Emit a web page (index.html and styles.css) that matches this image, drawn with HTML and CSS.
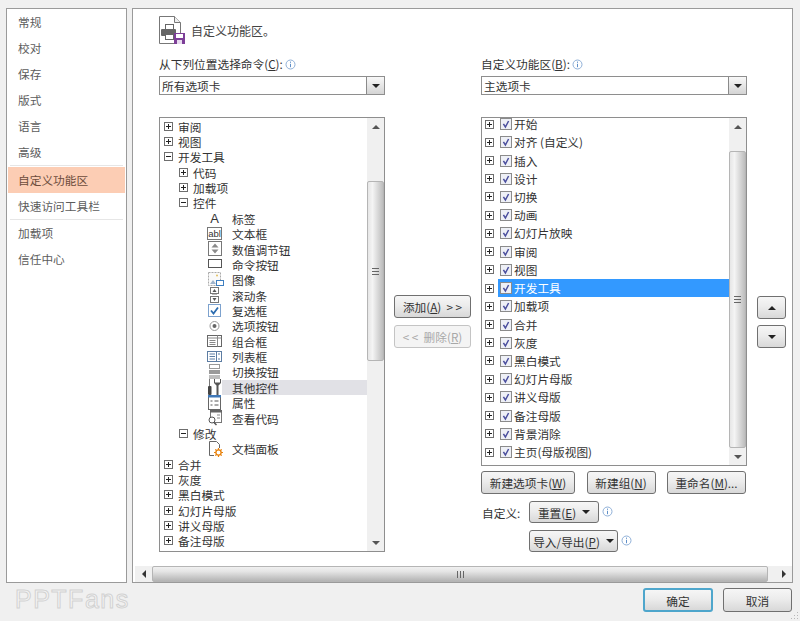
FILE: index.html
```html
<!DOCTYPE html>
<html lang="zh-CN">
<head>
    <meta charset="UTF-8">
    <title>自定义功能区</title>
    <link rel="stylesheet" href="styles.css">
</head>
<body>
    <!-- Shared tree glyphs -->
    <svg class="defs" width="0" height="0">
        <symbol id="plus" viewBox="0 0 9 9"><rect x=".5" y=".5" width="8" height="8" fill="#fff" stroke="#6e6e6e"/><path d="M2 4.5h5M4.5 2v5" stroke="#222"/></symbol>
        <symbol id="minus" viewBox="0 0 9 9"><rect x=".5" y=".5" width="8" height="8" fill="#fff" stroke="#6e6e6e"/><path d="M2 4.5h5" stroke="#222"/></symbol>
        <symbol id="check" viewBox="0 0 12 12"><rect x=".5" y=".5" width="11" height="11" fill="#eef0f6" stroke="#8b8b8b"/><path d="M3.4 5.8l2 3.2 3.2-6" fill="none" stroke="#4b4f9e" stroke-width="1.5"/></symbol>
        <symbol id="info" viewBox="0 0 11 11"><circle cx="5.5" cy="5.5" r="4.5" fill="#fff" stroke="#8fb0d8"/><path d="M5.5 2.6v1.2M5.5 4.8v3.4" stroke="#5f8fc8"/></symbol>
    </svg>

    <div class="window">
        <div class="panels">
            <!-- Left categories -->
            <div class="nav">
                <div class="nav-item">常规</div>
                <div class="nav-item">校对</div>
                <div class="nav-item">保存</div>
                <div class="nav-item">版式</div>
                <div class="nav-item">语言</div>
                <div class="nav-item">高级</div>
                <div class="nav-sep"></div>
                <div class="nav-item active">自定义功能区</div>
                <div class="nav-item">快速访问工具栏</div>
                <div class="nav-sep"></div>
                <div class="nav-item">加载项</div>
                <div class="nav-item">信任中心</div>
            </div>

            <div class="main">
                <div class="main-body">
                    <div class="heading">
                        <svg class="heading-icon" width="27" height="29" viewBox="0 0 27 29">
                            <path d="M.5.5h15l6 6v21H.5z" fill="#fff" stroke="#777"/>
                            <path d="M15.500.5v6h6" fill="#eee" stroke="#777"/>
                            <rect x="6.500" y="8.500" width="8" height="5" fill="#fff" stroke="#666"/>
                            <rect x="2" y="13" width="15" height="7" rx="1" fill="#666"/>
                            <rect x="6.500" y="18.500" width="8" height="5" fill="#fff" stroke="#666"/>
                            <rect x="15" y="17" width="11" height="11" fill="#7d3f98"/>
                            <rect x="17" y="18" width="7" height="4" fill="#fff"/>
                            <rect x="18" y="24" width="5" height="4" fill="#e8dcef"/>
                        </svg>
                        <span>自定义功能区。</span>
                    </div>

                    <div class="columns">
                        <div class="col-left">
                            <div class="field-label"><span>从下列位置选择命令(<u>C</u>):</span><svg class="info"><use href="#info"/></svg></div>
                            <div class="select"><span>所有选项卡</span><div class="select-btn"><i class="tri-down"></i></div></div>

                            <div class="tree tree-left">
                                <div class="tree-rows">
                                    <div class="row"><svg class="exp"><use href="#plus"/></svg><span class="text">审阅</span></div>
                                    <div class="row"><svg class="exp"><use href="#plus"/></svg><span class="text">视图</span></div>
                                    <div class="row"><svg class="exp"><use href="#minus"/></svg><span class="text">开发工具</span></div>
                                    <div class="row lv1"><svg class="exp"><use href="#plus"/></svg><span class="text">代码</span></div>
                                    <div class="row lv1"><svg class="exp"><use href="#plus"/></svg><span class="text">加载项</span></div>
                                    <div class="row lv1"><svg class="exp"><use href="#minus"/></svg><span class="text">控件</span></div>
                                    <div class="row leaf"><span class="glyph-a">A</span><span class="text">标签</span></div>
                                    <div class="row leaf"><span class="glyph-abl">abl</span><span class="text">文本框</span></div>
                                    <div class="row leaf"><svg class="ic" viewBox="0 0 16 16"><rect x="1.500" y=".5" width="13" height="14" fill="#fff" stroke="#777"/><path d="M8 2.500l3.500 4h-7zM8 12.500l3.500-4h-7z" fill="#8a8a8a"/></svg><span class="text">数值调节钮</span></div>
                                    <div class="row leaf"><svg class="ic" viewBox="0 0 16 16"><rect x="1.500" y="3.500" width="13" height="8" fill="#fff" stroke="#555"/></svg><span class="text">命令按钮</span></div>
                                    <div class="row leaf"><svg class="ic" viewBox="0 0 16 16"><rect x="1.500" y=".5" width="12" height="13" fill="#fafafa" stroke="#aaa" stroke-dasharray="2 1"/><path d="M3 12l3-4 3 4z" fill="#9fb4cc"/><circle cx="10" cy="3.500" r="1" fill="#e2c060"/><rect x="9.500" y="8.500" width="7" height="5" fill="#fff" stroke="#3f7fc0"/></svg><span class="text">图像</span></div>
                                    <div class="row leaf"><svg class="ic" viewBox="0 0 16 16"><rect x="3.500" y=".5" width="8" height="6" fill="#fff" stroke="#777"/><path d="M7.500 2l2 3h-4z" fill="#555"/><path d="M5 7.500h5" stroke="#bbb"/><rect x="3.500" y="9.500" width="8" height="6" fill="#fff" stroke="#777"/><path d="M7.500 14l2-3h-4z" fill="#555"/></svg><span class="text">滚动条</span></div>
                                    <div class="row leaf"><svg class="ic" viewBox="0 0 16 16"><rect x="1.500" y="1.500" width="12" height="12" fill="#fff" stroke="#7da2ce"/><path d="M4 7.500l2.500 3 4.500-6" fill="none" stroke="#2b6cb0" stroke-width="1.800"/></svg><span class="text">复选框</span></div>
                                    <div class="row leaf"><svg class="ic" viewBox="0 0 16 16"><circle cx="7.500" cy="8" r="4.500" fill="#fff" stroke="#999"/><circle cx="7.500" cy="8" r="2" fill="#666"/></svg><span class="text">选项按钮</span></div>
                                    <div class="row leaf"><svg class="ic" viewBox="0 0 16 16"><rect x=".5" y="2.500" width="14" height="11" fill="#fff" stroke="#666"/><path d="M.5 5h14M10.500 2.500v11M2.500 7.500h6M2.500 9.500h6M2.500 11.500h6" stroke="#888"/></svg><span class="text">组合框</span></div>
                                    <div class="row leaf"><svg class="ic" viewBox="0 0 16 16"><rect x=".5" y="2.500" width="14" height="10" fill="#fff" stroke="#5d7da3"/><path d="M9.500 2.500v10M2.500 5h5.500M2.500 7.500h5.500M2.500 10h5.500M11 5h2M11 10h2" stroke="#5d7da3"/></svg><span class="text">列表框</span></div>
                                    <div class="row leaf"><svg class="ic" viewBox="0 0 16 16"><rect x="2.500" y=".5" width="10" height="4" fill="#fff" stroke="#999"/><rect x="2" y="6" width="11" height="4" fill="#9a9a9a"/><rect x="2" y="11" width="11" height="4" fill="#bdbdbd"/></svg><span class="text">切换按钮</span></div>
                                    <div class="row leaf hover"><svg class="ic" viewBox="0 0 16 16"><path d="M2.500 0v7" stroke="#777"/><rect x="1" y="7" width="3.500" height="9" rx="1" fill="#444"/><path d="M7 0v4l2.500 2.500V16h2V6.500L14 4V0h-1v3.500H8V0z" fill="#555"/></svg><span class="text">其他控件</span></div>
                                    <div class="row leaf"><svg class="ic" viewBox="0 0 16 16"><rect x="1.500" y=".5" width="12" height="14" fill="#fff" stroke="#666"/><rect x="1" y="0" width="13" height="2.500" fill="#3f78b8"/><path d="M3.500 6h2M7.500 6h4M3.500 10h2M7.500 10h4" stroke="#555"/></svg><span class="text">属性</span></div>
                                    <div class="row leaf"><svg class="ic" viewBox="0 0 16 16"><rect x="3.500" y=".5" width="11" height="12" fill="#fff" stroke="#777"/><rect x="3" y="0" width="12" height="2.500" fill="#666"/><path d="M10 5h3M10 8h3" stroke="#888"/><circle cx="5" cy="10" r="3" fill="#fff" stroke="#555"/><path d="M7 12.500l2.500 2.500" stroke="#555" stroke-width="1.500"/></svg><span class="text">查看代码</span></div>
                                    <div class="row lv1"><svg class="exp"><use href="#minus"/></svg><span class="text">修改</span></div>
                                    <div class="row leaf"><svg class="ic" viewBox="0 0 16 16"><path d="M2.500.5h7l3 3v11h-10z" fill="#fff" stroke="#666"/><rect x="7" y="7" width="9" height="9" fill="#fff"/><path d="M11.500 7v9M7 11.500h9M8.300 8.300l6.400 6.400M14.700 8.300l-6.400 6.400" stroke="#e8820c" stroke-width="1.200"/><circle cx="11.500" cy="11.500" r="2.600" fill="#fff" stroke="#e8820c" stroke-width="1.300"/></svg><span class="text">文档面板</span></div>
                                    <div class="row"><svg class="exp"><use href="#plus"/></svg><span class="text">合并</span></div>
                                    <div class="row"><svg class="exp"><use href="#plus"/></svg><span class="text">灰度</span></div>
                                    <div class="row"><svg class="exp"><use href="#plus"/></svg><span class="text">黑白模式</span></div>
                                    <div class="row"><svg class="exp"><use href="#plus"/></svg><span class="text">幻灯片母版</span></div>
                                    <div class="row"><svg class="exp"><use href="#plus"/></svg><span class="text">讲义母版</span></div>
                                    <div class="row"><svg class="exp"><use href="#plus"/></svg><span class="text">备注母版</span></div>
                                </div>
                                <div class="vscroll">
                                    <div class="sb-arrow"><i class="tri-up"></i></div>
                                    <div class="sb-track track-left-a"></div>
                                    <div class="sb-thumb"><i class="grip"></i></div>
                                    <div class="sb-track track-left-b"></div>
                                    <div class="sb-arrow"><i class="tri-down"></i></div>
                                </div>
                            </div>
                        </div>

                        <div class="col-mid">
                            <div class="btn btn-mid">添加(<u>A</u>) &nbsp;&gt; &gt;</div>
                            <div class="btn btn-mid disabled">&lt; &lt; &nbsp;删除(<u>R</u>)</div>
                        </div>

                        <div class="col-right">
                            <div class="field-label"><span>自定义功能区(<u>B</u>):</span><svg class="info"><use href="#info"/></svg></div>
                            <div class="select"><span>主选项卡</span><div class="select-btn"><i class="tri-down"></i></div></div>

                            <div class="tree tree-right">
                                <div class="tree-rows">
                                    <div class="row"><svg class="exp"><use href="#plus"/></svg><span class="item"><svg class="chk"><use href="#check"/></svg>开始</span></div>
                                    <div class="row"><svg class="exp"><use href="#plus"/></svg><span class="item"><svg class="chk"><use href="#check"/></svg>对齐 (自定义)</span></div>
                                    <div class="row"><svg class="exp"><use href="#plus"/></svg><span class="item"><svg class="chk"><use href="#check"/></svg>插入</span></div>
                                    <div class="row"><svg class="exp"><use href="#plus"/></svg><span class="item"><svg class="chk"><use href="#check"/></svg>设计</span></div>
                                    <div class="row"><svg class="exp"><use href="#plus"/></svg><span class="item"><svg class="chk"><use href="#check"/></svg>切换</span></div>
                                    <div class="row"><svg class="exp"><use href="#plus"/></svg><span class="item"><svg class="chk"><use href="#check"/></svg>动画</span></div>
                                    <div class="row"><svg class="exp"><use href="#plus"/></svg><span class="item"><svg class="chk"><use href="#check"/></svg>幻灯片放映</span></div>
                                    <div class="row"><svg class="exp"><use href="#plus"/></svg><span class="item"><svg class="chk"><use href="#check"/></svg>审阅</span></div>
                                    <div class="row"><svg class="exp"><use href="#plus"/></svg><span class="item"><svg class="chk"><use href="#check"/></svg>视图</span></div>
                                    <div class="row"><svg class="exp"><use href="#plus"/></svg><span class="item selected"><svg class="chk"><use href="#check"/></svg>开发工具</span></div>
                                    <div class="row"><svg class="exp"><use href="#plus"/></svg><span class="item"><svg class="chk"><use href="#check"/></svg>加载项</span></div>
                                    <div class="row"><svg class="exp"><use href="#plus"/></svg><span class="item"><svg class="chk"><use href="#check"/></svg>合并</span></div>
                                    <div class="row"><svg class="exp"><use href="#plus"/></svg><span class="item"><svg class="chk"><use href="#check"/></svg>灰度</span></div>
                                    <div class="row"><svg class="exp"><use href="#plus"/></svg><span class="item"><svg class="chk"><use href="#check"/></svg>黑白模式</span></div>
                                    <div class="row"><svg class="exp"><use href="#plus"/></svg><span class="item"><svg class="chk"><use href="#check"/></svg>幻灯片母版</span></div>
                                    <div class="row"><svg class="exp"><use href="#plus"/></svg><span class="item"><svg class="chk"><use href="#check"/></svg>讲义母版</span></div>
                                    <div class="row"><svg class="exp"><use href="#plus"/></svg><span class="item"><svg class="chk"><use href="#check"/></svg>备注母版</span></div>
                                    <div class="row"><svg class="exp"><use href="#plus"/></svg><span class="item"><svg class="chk"><use href="#check"/></svg>背景消除</span></div>
                                    <div class="row"><svg class="exp"><use href="#plus"/></svg><span class="item"><svg class="chk"><use href="#check"/></svg>主页(母版视图)</span></div>
                                </div>
                                <div class="vscroll">
                                    <div class="sb-arrow tall"><i class="tri-up"></i></div>
                                    <div class="sb-thumb thumb-right"><i class="grip"></i></div>
                                    <div class="sb-arrow"><i class="tri-down"></i></div>
                                </div>
                            </div>

                            <div class="tree-actions">
                                <div class="btn btn-new-tab">新建选项卡(<u>W</u>)</div>
                                <div class="btn btn-new-group">新建组(<u>N</u>)</div>
                                <div class="btn btn-rename">重命名(<u>M</u>)...</div>
                            </div>
                            <div class="custom-row">
                                <span class="custom-label">自定义:</span>
                                <div class="btn btn-drop btn-reset"><span>重置(<u>E</u>)</span><i class="tri-down dark"></i></div>
                                <svg class="info"><use href="#info"/></svg>
                            </div>
                            <div class="custom-row second">
                                <div class="btn btn-drop btn-import"><span>导入/导出(<u>P</u>)</span><i class="tri-down dark"></i></div>
                                <svg class="info"><use href="#info"/></svg>
                            </div>
                        </div>

                        <div class="col-arrows">
                            <div class="btn btn-arrow"><i class="tri-up dark"></i></div>
                            <div class="btn btn-arrow"><i class="tri-down dark"></i></div>
                        </div>
                    </div>
                </div>

                <div class="hscroll">
                    <div class="hs-arrow"><i class="tri-left"></i></div>
                    <div class="hs-thumb"><i class="grip-h"></i></div>
                    <div class="hs-arrow last"><i class="tri-right"></i></div>
                </div>
            </div>
        </div>

        <div class="footer">
            <div class="logo">PPTFans</div>
            <div class="btn btn-ok">确定</div>
            <div class="btn btn-cancel">取消</div>
        </div>
        <svg class="resize-grip" width="9" height="9" viewBox="0 0 9 9"><path d="M7 1h1v1H7zM4 4h1v1H4zM7 4h1v1H7zM1 7h1v1H1zM4 7h1v1H4zM7 7h1v1H7z" fill="#b8b8b8"/></svg>
    </div>
</body>
</html>
```

FILE: styles.css
```css
* {
    box-sizing: border-box;
}
body {
    margin: 0;
    background-color: #f0f0f0;
    font-family: "Noto Sans CJK SC", "Liberation Sans", sans-serif;
    font-size: 11.7px;
    color: #333;
    overflow: hidden;
}
.defs {
    display: block;
    height: 0;
}
.window {
    position: relative;
    width: 800px;
    height: 621px;
    display: flex;
    flex-direction: column;
    padding: 8px 7px 0 6px;
}
.panels {
    display: flex;
    gap: 5px;
    height: 575px;
}

/* left categories */
.nav {
    width: 121px;
    background-color: #fff;
    border: 1px solid #9a9a9a;
    padding: 0 1px;
    color: #5c5c5c;
}
.nav-item {
    height: 26px;
    line-height: 26px;
    padding-left: 10px;
}
.nav-item.active {
    background-color: #fccdb4;
    color: #6d4c3c;
}
.nav-sep {
    height: 1px;
    margin: 0 2px;
    background-color: #e6e6e6;
}
.nav-sep + .active {
    margin-top: 1px;
}

/* main panel */
.main {
    width: 661px;
    background-color: #fff;
    border: 1px solid #9a9a9a;
    display: flex;
    flex-direction: column;
}
.main-body {
    flex: 1;
    padding: 7px 0 0 26px;
}
.heading {
    display: flex;
    align-items: center;
    gap: 5px;
    height: 29px;
    font-size: 12px;
    color: #444;
}
.columns {
    display: flex;
    margin-top: 11px;
}
.col-left {
    width: 226px;
}
.col-right {
    width: 266px;
}
.field-label {
    height: 16px;
    line-height: 16px;
    margin-bottom: 4px;
    display: flex;
    align-items: center;
    white-space: pre;
}
.info {
    width: 11px;
    height: 11px;
    margin-left: 2px;
    flex: none;
}
.select {
    height: 19px;
    line-height: 17px;
    border: 1px solid #8e8e8e;
    display: flex;
    align-items: center;
    justify-content: space-between;
    padding-left: 2px;
}
.select-btn {
    width: 18px;
    height: 17px;
    border-left: 1px solid #8a8a8a;
    background: linear-gradient(#f8f8f8, #d4d4d4);
    display: flex;
    align-items: center;
    justify-content: center;
}
.select-btn .tri-down {
    border-top-color: #222;
}

/* triangles */
.tri-up, .tri-down, .tri-left, .tri-right {
    display: block;
    width: 0;
    height: 0;
    border-style: solid;
    border-color: transparent;
}
.tri-up {
    border-width: 0 4px 4px;
    border-bottom-color: #555;
}
.tri-down {
    border-width: 4px 4px 0;
    border-top-color: #555;
}
.tri-left {
    border-width: 4px 4px 4px 0;
    border-right-color: #333;
}
.tri-right {
    border-width: 4px 0 4px 4px;
    border-left-color: #333;
}

/* trees */
.tree {
    margin-top: 22px;
    border: 1px solid #8e8e8e;
    display: flex;
    overflow: hidden;
}
.tree-left {
    height: 435px;
}
.tree-right {
    height: 349px;
}
.tree-rows {
    flex: 1;
    min-width: 0;
}
.tree-left .tree-rows {
    padding-top: .5px;
}
.tree-right .tree-rows {
    margin-top: -3px;
}
.row {
    display: flex;
    align-items: center;
    white-space: pre;
}
.tree-left .row {
    height: 15.37px;
    line-height: 15px;
    padding-left: 4px;
}
.tree-right .row {
    height: 18.22px;
    line-height: 18px;
    padding-left: 3px;
}
.exp {
    width: 9px;
    height: 9px;
    flex: none;
}
.text {
    margin-left: 5px;
    flex: 1;
}
.row.lv1 {
    padding-left: 19px;
}
.row.leaf {
    padding-left: 47px;
}
.leaf .text {
    margin-left: 0;
    padding-left: 10px;
    height: 15px;
}
.leaf.hover .text {
    background-color: #e1e1e6;
}
.ic {
    width: 16px;
    height: 16px;
    flex: none;
    margin-right: -1px;
    overflow: visible;
}
.glyph-a {
    width: 15px;
    flex: none;
    text-align: center;
    font: 13px/15px "Liberation Sans", sans-serif;
}
.glyph-abl {
    width: 15px;
    height: 13px;
    flex: none;
    border: 1px solid #777;
    font: 9.5px/11px "Liberation Sans", sans-serif;
    text-align: center;
}
.item {
    flex: 1;
    margin-left: 4px;
    height: 18px;
    display: flex;
    align-items: center;
}
.item.selected {
    background-color: #3399ff;
    color: #fff;
}
.chk {
    width: 12px;
    height: 12px;
    margin: 0 2px;
    flex: none;
}

/* scrollbars */
.vscroll {
    width: 17px;
    flex: none;
    display: flex;
    flex-direction: column;
    background-color: #f0f0f0;
}
.sb-arrow {
    height: 17px;
    flex: none;
    display: flex;
    align-items: center;
    justify-content: center;
}
.sb-arrow.tall {
    height: 33px;
    padding-bottom: 16px;
}
.sb-track {
    flex: none;
}
.track-left-a {
    height: 46px;
}
.track-left-b {
    flex: 1;
}
.sb-thumb {
    height: 180px;
    flex: none;
    background: linear-gradient(90deg, #e6e6e6, #f4f4f4 30%, #bdbdbd);
    border: 1px solid #b5b5b5;
    border-radius: 2px;
    display: flex;
    align-items: center;
    justify-content: center;
}
.sb-thumb.thumb-right {
    flex: 1;
    height: auto;
}
.grip {
    width: 7px;
    height: 7px;
    border-top: 1px solid #666;
    border-bottom: 1px solid #666;
    background: linear-gradient(#666, #666) center / 100% 1px no-repeat;
}
.hscroll {
    height: 16px;
    margin-left: 2px;
    display: flex;
    background-color: #f0f0f0;
}
.hs-arrow {
    width: 17px;
    flex: none;
    display: flex;
    align-items: center;
    justify-content: center;
}
.hs-arrow.last {
    flex: 1;
    padding-left: 8px;
}
.hs-thumb {
    width: 616px;
    flex: none;
    background: linear-gradient(#f0f0f0, #e6e6e6 30%, #b4b4b4);
    border: 1px solid #b5b5b5;
    border-radius: 2px;
    display: flex;
    align-items: center;
    justify-content: center;
}
.grip-h {
    width: 7px;
    height: 7px;
    border-left: 1px solid #666;
    border-right: 1px solid #666;
    background: linear-gradient(#666, #666) center / 1px 100% no-repeat;
}

/* buttons */
.btn {
    display: flex;
    align-items: center;
    justify-content: center;
    flex: none;
    height: 23px;
    border: 1px solid #707070;
    border-radius: 3px;
    background: linear-gradient(#f6f6f6, #ececec 45%, #d8d8d8);
    white-space: pre;
}
.btn.disabled {
    border-color: #c4c4c4;
    background: #f4f4f4;
    color: #a8a8a8;
}
.col-mid {
    width: 96px;
    flex: none;
    padding: 239px 0 0 9px;
}
.btn-mid {
    width: 77px;
}
.btn-mid + .btn-mid {
    margin-top: 7px;
}
.col-arrows {
    margin-left: 10px;
    padding-top: 240px;
}
.btn-arrow {
    width: 29px;
}
.btn-arrow + .btn-arrow {
    margin-top: 6px;
}
.tri-up.dark {
    border-bottom-color: #222;
}
.tri-down.dark {
    border-top-color: #222;
}
.tree-actions {
    display: flex;
    justify-content: space-between;
    margin-top: 5px;
    margin-right: 1px;
}
.btn-new-tab {
    width: 94px;
}
.btn-new-group {
    width: 69px;
}
.btn-rename {
    width: 79px;
}
.custom-row {
    display: flex;
    align-items: center;
    margin-top: 7px;
    height: 22px;
}
.custom-row.second {
    padding-left: 48px;
}
.custom-row .info {
    margin-left: 3px;
    margin-bottom: 2px;
}
.custom-label {
    width: 48px;
    padding-left: 1px;
}
.btn-drop {
    height: 22px;
    gap: 6px;
}
.btn-reset {
    width: 70px;
}
.btn-import {
    width: 89px;
}

/* footer */
.footer {
    display: flex;
    align-items: flex-start;
    padding-top: 5px;
}
.logo {
    margin: -2px auto 0 9px;
    font: 25px/26px "Liberation Sans", sans-serif;
    letter-spacing: 1.5px;
    color: #f5f5f5;
    -webkit-text-stroke: 1px #d2d2d2;
}
.btn-ok {
    width: 70px;
    height: 24px;
    border: 2px solid #4ea6cc;
}
.btn-cancel {
    width: 69px;
    height: 24px;
    margin-left: 10px;
    margin-right: 1px;
}
.resize-grip {
    position: absolute;
    right: 1px;
    bottom: 1px;
}
```
